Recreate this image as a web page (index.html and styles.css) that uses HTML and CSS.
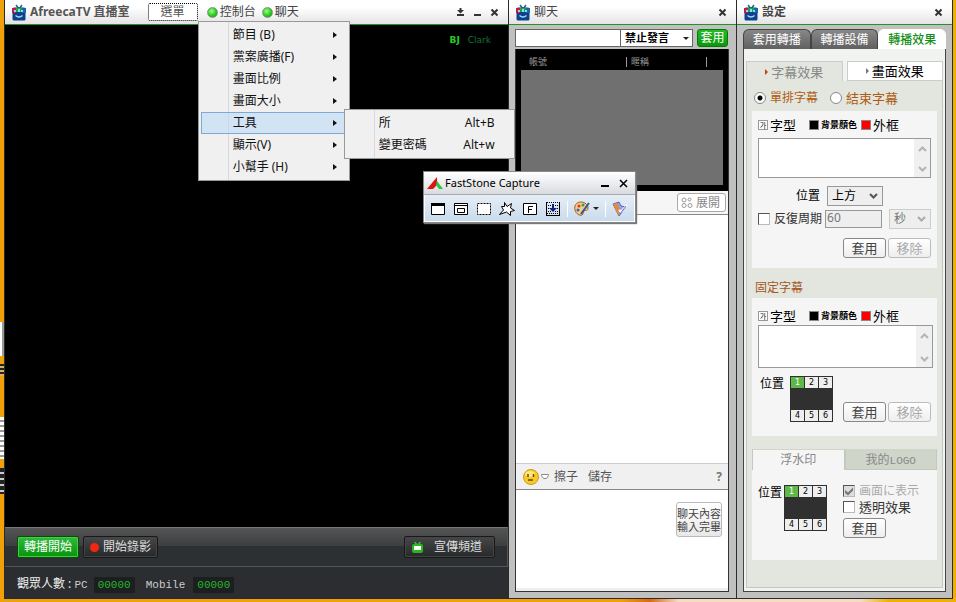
FILE: index.html
```html
<!DOCTYPE html>
<html lang="zh-Hant">
<head>
<meta charset="utf-8">
<title>AfreecaTV 直播室</title>
<link rel="stylesheet" href="styles.css">
</head>
<body>
<svg class="defs" aria-hidden="true">
  <symbol id="tv" viewBox="0 0 14 17">
    <path d="M4 1l3 4 3-4" fill="none" stroke="#1b6b78" stroke-width="1.5"/>
    <rect x="0.5" y="3.500" width="13" height="13" rx="1.500" fill="#123f8c"/>
    <path d="M0 4h4v5H0z" fill="#c2184e"/><path d="M4 4h6v4H4z" fill="#20a04a"/><path d="M10 4h4v5h-4z" fill="#1565a8"/>
    <path d="M2 6h2v2H2zM9 6h2v2H9zM6 5h2v3H6z" fill="#8ce0e8"/>
    <path d="M3.500 11.500q3.500 3 7 0" fill="none" stroke="#8fe6ff" stroke-width="1.500"/>
  </symbol>
  <symbol id="x" viewBox="0 0 9 9"><path d="M1.500 1.500l6 6M7.500 1.500l-6 6" fill="none" stroke="currentColor" stroke-width="2"/></symbol>
  <symbol id="up" viewBox="0 0 9 6"><path d="M1 5l3.500-3.500L8 5" fill="none" stroke="#b4b4b4" stroke-width="2"/></symbol>
  <symbol id="down" viewBox="0 0 9 6"><path d="M1 1l3.500 3.500L8 1" fill="none" stroke="currentColor" stroke-width="2"/></symbol>
</svg>
<main class="desktop">
  <section class="window studio">
    <header class="titlebar">
      <svg class="logo"><use href="#tv"/></svg>
      <h1 class="brand">AfreecaTV 直播室</h1>
      <nav class="menu-root">
        <button class="menu-button" type="button">選單</button>
        <ul class="menu">
          <li><button type="button">節目 (B)</button></li>
          <li><button type="button">黨案廣播(F)</button></li>
          <li><button type="button">畫面比例</button></li>
          <li><button type="button">畫面大小</button></li>
          <li class="open"><button type="button">工具</button>
            <ul class="menu submenu">
              <li><button type="button">所<kbd>Alt+B</kbd></button></li>
              <li><button type="button">變更密碼<kbd>Alt+w</kbd></button></li>
            </ul>
          </li>
          <li><button type="button">顯示(V)</button></li>
          <li><button type="button">小幫手 (H)</button></li>
        </ul>
      </nav>
      <button class="toggle" type="button"><i class="lamp"></i>控制台</button>
      <button class="toggle" type="button"><i class="lamp"></i>聊天</button>
      <div class="controls">
        <button type="button" aria-label="收合"><svg viewBox="0 0 9 9"><path d="M3.500 0h2v2H8L4.500 5.500 1 2h2.500zM1 6h7v2H1z" fill="currentColor"/></svg></button>
        <button type="button" aria-label="最小化"><svg viewBox="0 0 9 9"><path d="M1 6h7v2H1z" fill="currentColor"/></svg></button>
        <button type="button" aria-label="關閉"><svg><use href="#x"/></svg></button>
      </div>
    </header>
    <div class="stage"><p class="host"><b>BJ</b>Clark</p></div>
    <div class="deck">
      <button class="deck-button go" type="button">轉播開始</button>
      <button class="deck-button record" type="button"><i class="rec"></i>開始錄影</button>
      <button class="deck-button channel" type="button">
        <svg viewBox="0 0 11 11"><path d="M2.500 0l2 2M8.500 0l-2 2" stroke="#35c828" stroke-width="1.500"/><rect y="2" width="11" height="9" rx="2" fill="#28b51e"/><path d="M2 4h7v4H2z" fill="#fff"/></svg>宣傳頻道</button>
    </div>
    <footer class="viewers">
      <span>觀眾人數 : <span class="mono">PC</span></span><output>00000</output>
      <span class="mono mobile">Mobile</span><output>00000</output>
    </footer>
  </section>

  <section class="window chat">
    <header class="titlebar">
      <svg class="logo"><use href="#tv"/></svg>
      <h2>聊天</h2>
      <div class="controls"><button type="button" aria-label="關閉"><svg><use href="#x"/></svg></button></div>
    </header>
    <div class="frame">
      <form class="moderate">
        <input class="who" type="text" aria-label="帳號">
        <span class="picker"><select aria-label="動作"><option>禁止發言</option></select><i class="caret"></i></span>
        <button class="apply" type="button">套用</button>
      </form>
      <div class="chat-body">
        <div class="users">
          <div class="columns"><span>帳號</span><span>暱稱</span><span></span></div>
          <div class="user-list"></div>
        </div>
        <div class="expand-row">
          <button class="expand" type="button"><svg viewBox="0 0 12 12" fill="none" stroke="#999"><circle cx="3" cy="3" r="2"/><circle cx="8.500" cy="2.500" r="1.500"/><circle cx="3" cy="8.500" r="2"/><circle cx="9" cy="8.500" r="2"/></svg>展開</button>
        </div>
        <div class="messages"></div>
        <div class="chat-tools">
          <button type="button" aria-label="表情"><svg class="smile" viewBox="0 0 16 16"><circle cx="8" cy="8" r="7.500" fill="#f8ca28" stroke="#d29a16"/><ellipse cx="7" cy="5" rx="5" ry="3" fill="#ffe878"/><path d="M5 5v3M10.500 5v3M5 11h5" stroke="#6b4712" stroke-width="1.500"/></svg><svg class="drop" viewBox="0 0 8 5"><path d="M.5.5h7v1l-2 3h-3l-2-3z" fill="#fff" stroke="#888"/></svg></button>
          <button type="button">擦子</button>
          <button type="button">儲存</button>
          <button class="help" type="button">?</button>
        </div>
        <div class="compose">
          <textarea aria-label="聊天內容"></textarea>
          <button class="send" type="button"><span>聊天內容</span><span>輸入完畢</span></button>
        </div>
      </div>
    </div>
  </section>

  <section class="window settings">
    <header class="titlebar">
      <svg class="logo"><use href="#tv"/></svg>
      <h2 class="strong">設定</h2>
      <div class="controls"><button type="button" aria-label="關閉"><svg><use href="#x"/></svg></button></div>
    </header>
    <div class="frame">
      <div class="tabs" role="tablist">
        <button type="button" role="tab">套用轉播</button>
        <button type="button" role="tab">轉播設備</button>
        <button type="button" role="tab" aria-selected="true">轉播效果</button>
      </div>
      <div class="panel">
        <div class="subtabs">
          <button class="current" type="button"><i></i>字幕效果</button>
          <button type="button"><i></i>畫面效果</button>
        </div>
        <div class="inner">
          <div class="modes">
            <label><input type="radio" name="mode" checked>單排字幕</label>
            <label class="wide"><input type="radio" name="mode">結束字幕</label>
          </div>
          <div class="box first">
            <div class="style-row">
              <button class="font" type="button"><i class="glyph">가</i>字型</button>
              <button class="bg" type="button"><i class="swatch black"></i><span>背景顏色</span></button>
              <button type="button"><i class="swatch red"></i>外框</button>
            </div>
            <div class="caption"><textarea aria-label="單排字幕"></textarea><span class="scroll"><svg><use href="#up"/></svg><svg><use href="#down"/></svg></span></div>
            <div class="place-row"><label for="pos">位置</label><span class="drop-box"><select id="pos"><option>上方</option></select><svg><use href="#down"/></svg></span></div>
            <div class="cycle-row"><label><input type="checkbox">反復周期</label><input class="secs" type="text" value="60" aria-label="周期" disabled><span class="drop-box off"><select aria-label="單位" disabled><option>秒</option></select><svg><use href="#down"/></svg></span></div>
            <div class="actions"><button class="btn" type="button">套用</button><button class="btn" type="button" disabled>移除</button></div>
          </div>
          <h3>固定字幕</h3>
          <div class="box second">
            <div class="style-row">
              <button class="font" type="button"><i class="glyph">가</i>字型</button>
              <button class="bg" type="button"><i class="swatch black"></i><span>背景顏色</span></button>
              <button type="button"><i class="swatch red"></i>外框</button>
            </div>
            <div class="caption"><textarea aria-label="固定字幕"></textarea><span class="scroll"><svg><use href="#up"/></svg><svg><use href="#down"/></svg></span></div>
            <div class="spot-row">
              <span>位置</span>
              <div class="spots"><button class="on" type="button">1</button><button type="button">2</button><button type="button">3</button><button type="button">4</button><button type="button">5</button><button type="button">6</button></div>
              <div class="actions"><button class="btn" type="button">套用</button><button class="btn" type="button" disabled>移除</button></div>
            </div>
          </div>
          <div class="mark-tabs"><button class="current" type="button">浮水印</button><button type="button">我的<span class="mono">LOGO</span></button></div>
          <div class="box third">
            <div class="spot-row">
              <span>位置</span>
              <div class="spots"><button class="on" type="button">1</button><button type="button">2</button><button type="button">3</button><button type="button">4</button><button type="button">5</button><button type="button">6</button></div>
              <div class="checks">
                <label class="off"><input type="checkbox" checked disabled>画面に表示</label>
                <label class="clear"><input type="checkbox">透明效果</label>
                <button class="btn" type="button">套用</button>
              </div>
            </div>
          </div>
        </div>
      </div>
    </div>
  </section>

  <section class="capture">
    <header>
      <svg class="mark" viewBox="0 0 16 13"><path d="M0 12L10 0v8l-4 4z" fill="#dc1414"/><path d="M10 4l6 8h-4l-3-4z" fill="#28c83c"/></svg>
      <h2>FastStone Capture</h2>
      <button type="button" aria-label="最小化"><svg viewBox="0 0 9 9"><path d="M0 6h8v2H0z"/></svg></button>
      <button type="button" aria-label="關閉"><svg viewBox="0 0 9 9"><path d="M1 1l7 7M8 1L1 8" stroke="#000" stroke-width="1.500"/></svg></button>
    </header>
    <div class="tools">
      <button type="button" aria-label="視窗"><svg viewBox="0 0 16 16"><path d="M1.500 2.500h13v11h-13z" fill="#fff" stroke="#000"/><path d="M1 2h14v3H1z"/></svg></button>
      <button type="button" aria-label="物件"><svg viewBox="0 0 16 16"><path d="M1.500 2.500h13v11h-13zM2 4.500h12M4.500 7.500h7v4h-7z" fill="#fff" stroke="#000"/></svg></button>
      <button type="button" aria-label="矩形"><svg viewBox="0 0 16 16"><path d="M1.500 2.500h13v11h-13z" fill="#fff" stroke="#000" stroke-dasharray="2 1"/></svg></button>
      <button type="button" aria-label="手繪"><svg viewBox="0 0 16 16"><path d="M5.500 1.500L8 5.500l4.500-3-1 4.500 4 2.500-4 1v4L7.500 11 .5 13.500l4-4.500-2-3.500h3z" fill="#fff" stroke="#000"/></svg></button>
      <button type="button" aria-label="全螢幕"><svg viewBox="0 0 16 16"><path d="M1.500 2.500h13v11h-13z" fill="#fff" stroke="#000"/><path d="M6.500 12V5.500H11M6.500 8.500H10" fill="none" stroke="#000"/></svg></button>
      <button type="button" aria-label="捲動"><svg viewBox="0 0 16 16"><path d="M1.500 1v14M14.500 1v14M2 14.500h12" stroke="#000"/><path d="M2 1.500h12M2 12.500h12M3 4.500h3M10 4.500h3M3 7.500h1M12 7.500h1M3 10.500h3M10 10.500h3" stroke="#000" stroke-dasharray="1 1"/><path d="M7 3h2v4h3l-4 4-4-4h3z" fill="#102080"/></svg></button>
      <button class="split" type="button" aria-label="繪圖"><svg viewBox="0 0 16 16"><path d="M7 1C2 1 0 5 1 9c1 4 5 6 7 5s0-3 2-4 4 0 4-3-3-6-7-6z" fill="#f6cd83" stroke="#a05c20"/><circle cx="5" cy="5" r="1.500" fill="#d33"/><circle cx="9" cy="4" r="1.500" fill="#2a4"/><circle cx="4" cy="9" r="1.500" fill="#36c"/><path d="M15 2L7 13" stroke="#3456a5" stroke-width="2"/></svg><i class="caret"></i></button>
      <button class="split" type="button" aria-label="設定"><svg viewBox="0 0 16 16"><path d="M1 3l6-2 2 4 5 1-7 9z" fill="#8fa8e8" stroke="#5068b8"/><path d="M1 3l3 7 3 5 1-7-2-6z" fill="#e08a48"/><path d="M7 9l2 2 6-7" fill="none" stroke="#fff" stroke-width="2"/><path d="M8 13l6-8" stroke="#7658c8"/></svg></button>
    </div>
  </section>
</main>
</body>
</html>
```
FILE: styles.css
```css
* { box-sizing: border-box; }
body {
  margin: 0;
  font: 12px/16px "Noto Sans", "Noto Sans CJK TC", sans-serif;
  color: #333;
}
button, input, select, textarea { font: inherit; color: inherit; margin: 0; padding: 0; border: 0; border-radius: 0; background: none; }
button { white-space: nowrap; }
input, select, textarea { min-width: 0; }
select { appearance: none; }
h1, h2, h3, p, ul { margin: 0; padding: 0; font-weight: 400; font-size: 12px; }
ul { list-style: none; }
i { font-style: normal; flex: none; }
svg { display: block; flex: none; }
.defs { position: absolute; width: 0; height: 0; }
.mono, output { font-family: "Liberation Mono", monospace; font-size: 11px; }

.desktop {
  position: relative;
  display: grid;
  grid-template-columns: minmax(0, 1fr) 228px 217px;
  min-height: 100vh;
  padding: 0 3px 3px 4px;
  background:
    linear-gradient(90deg, #fff 0 2px, #999 2px) 0 322px / 4px 34px no-repeat,
    repeating-linear-gradient(#222 0 2px, #ddb060 2px 4px) 0 364px / 4px 12px no-repeat,
    repeating-linear-gradient(#fff 0 3px, #999 3px 5px) 0 417px / 4px 42px no-repeat,
    repeating-linear-gradient(#222 0 4px, #ccc 4px 6px) 0 468px / 4px 26px no-repeat,
    linear-gradient(90deg, #f0a008 0 65%, #d86a10 68%, #f8dcc0 71% 90%, #f0b000 93%);
}
.window { display: flex; flex-direction: column; border-left: 1px solid #2b2b2b; border-bottom: 1px solid #2b2b2b; min-width: 0; }
.titlebar {
  display: flex;
  align-items: center;
  height: 25px;
  padding: 0 9px 0 7px;
  background: linear-gradient(#fff 30%, #e4e4e4);
  border-bottom: 1px solid #279127;
  color: #444;
}
.logo { width: 14px; height: 17px; margin-right: 4px; }
.brand { font-weight: 700; color: #555; }
.strong { font-weight: 700; }
.controls { display: flex; gap: 8px; margin-left: auto; color: #333; }
.controls svg { width: 9px; height: 9px; }
.menu-root { position: relative; margin: 0 9px 0 18px; }
.menu-button { display: block; width: 50px; height: 18px; border: 1px dotted #000; border-radius: 2px; line-height: 16px; background: #fff; color: #555; }
.toggle { display: flex; align-items: center; gap: 2px; margin-right: 6px; }
.lamp { width: 11px; height: 11px; border-radius: 50%; border: 1px solid #7c9c7c; background: radial-gradient(circle at 40% 35%, #9cff80, #22c41c 60%, #0c970c); }

.menu {
  position: absolute;
  z-index: 2;
  left: 50px;
  top: 18px;
  width: 152px;
  padding: 2px;
  color: #111;
  border: 1px solid #999;
  background: linear-gradient(90deg, transparent 29px, #d5d9e2 29px 30px, transparent 30px) #f0f0f0;
}
.menu li { position: relative; }
.menu button { display: flex; justify-content: space-between; width: 100%; height: 22px; padding: 0 16px 0 31px; line-height: 20px; border: 1px solid transparent; text-align: left; }
.menu > li > button::after { content: ""; position: absolute; right: 10px; top: 8px; border: 3px solid transparent; border-left: 4px solid #111; border-right: 0; }
.menu .open > button { border-color: #7da8d8; background: rgba(190, 218, 245, .6); }
.menu .submenu { left: 143px; top: -3px; width: 171px; }
.menu .submenu > li > button::after { display: none; }
.menu kbd { font: inherit; }

.stage { flex: 1; background: #000; }
.host { display: flex; justify-content: flex-end; gap: 8px; padding: 7px 17px; font: 9px/16px "DejaVu Sans", sans-serif; color: #187038; }
.host b { color: #28c828; }
.deck {
  display: flex;
  gap: 4px;
  height: 40px;
  padding: 8px 12px;
  border: 1px solid #555;
  border-top-color: #777;
  border-left: 0;
  background: linear-gradient(#555 0, #3c3e40 18px, #2d3032 18px);
}
.deck-button { display: flex; align-items: center; justify-content: center; height: 22px; padding: 0 6px; line-height: 18px; color: #ddd; border: 1px solid #191919; border-radius: 2px; background: linear-gradient(#454749, #26282a); box-shadow: inset 0 0 0 1px #444; }
.deck .go { color: #fff; background: linear-gradient(#30ba3c, #05940b); border-color: #0a4c0a; box-shadow: inset 0 0 0 1px #45cc45; }
.rec { width: 9px; height: 9px; margin-right: 4px; border-radius: 50%; background: #f02810; }
.channel { margin-left: auto; padding: 0 12px 0 7px; }
.channel svg { width: 11px; height: 11px; margin-right: 11px; }
.viewers { display: flex; align-items: center; height: 31px; padding: 4px 12px 0; background: #2b2d30; color: #eee; }
.viewers .mono { color: #ccc; }
.viewers output { margin-left: 6px; padding: 0 4px; color: #28b52c; background: #1c1f20; }
.mobile { margin-left: 11px; }
.viewers .mobile + output { margin-left: 8px; }

.frame { flex: 1; display: flex; flex-direction: column; padding: 4px 6px 6px; background: #c0c0c0; }
.chat .frame { padding-right: 7px; }
.moderate { display: flex; height: 18px; margin-bottom: 2px; }
.who { flex: 1; border: 1px solid #666; background: #fff; }
.picker { display: flex; align-items: center; width: 72px; padding: 0 3px 0 4px; border: 1px solid #666; border-left: 0; background: #fff; color: #000; }
.picker select { flex: 1; font-size: 11px; font-weight: 700; line-height: 14px; }
.caret { border: 3px solid transparent; border-top: 3px solid #222; border-bottom: 0; }
.apply { width: 31px; margin: 0 1px 0 4px; line-height: 16px; color: #fff; border: 1px solid #087808; border-radius: 3px; background: linear-gradient(#28bb28, #0b980b); }
.chat-body { flex: 1; display: flex; flex-direction: column; border: 1px solid #333; border-top: 0; background: #fff; }
.users { height: 142px; padding: 4px 5px 6px; background: #000; display: flex; flex-direction: column; }
.columns { display: grid; grid-template-columns: 105px 80px 1fr; align-items: center; height: 17px; font-size: 9px; line-height: 10px; color: #999; }
.columns span { height: 10px; padding-left: 4px; border-left: 1px solid #999; }
.columns span:first-child { padding-left: 8px; border: 0; }
.user-list { flex: 1; background: #707070; }
.expand-row { display: flex; justify-content: flex-end; height: 24px; padding: 2px; background: #f6f6f6; border-bottom: 1px solid #888; }
.expand { display: flex; align-items: center; gap: 3px; height: 19px; padding: 0 5px 0 3px; border: 1px solid #aaa; border-radius: 3px; color: #888; background: #fff; }
.expand svg { width: 12px; height: 12px; }
.messages { flex: 1; }
.chat-tools { display: flex; align-items: center; gap: 10px; height: 27px; padding: 0 6px 0 7px; background: #f0f0f0; border-top: 1px solid #ccc; border-bottom: 1px solid #888; color: #555; }
.chat-tools button:first-child { display: flex; align-items: center; gap: 2px; margin-right: -5px; }
.smile { width: 16px; height: 16px; }
.drop { width: 8px; height: 5px; }
.help { margin-left: auto; font-weight: 700; color: #777; }
.compose { display: flex; height: 101px; padding: 12px 6px 0 0; border-bottom: 3px solid #eee; }
.compose textarea { flex: 1; resize: none; }
.send { display: flex; flex-direction: column; align-items: center; justify-content: center; width: 46px; height: 35px; font-size: 11px; line-height: 13px; border: 1px solid #bbb; border-radius: 3px; background: linear-gradient(#fff, #e8e8e8); color: #444; }

.settings { border-right: 1px solid #2b2b2b; }
.tabs { display: flex; height: 20px; }
.tabs button { flex: 1; line-height: 18px; color: #fff; background: linear-gradient(#888, #606060); border: 1px solid #444; border-bottom: 0; border-radius: 6px 6px 0 0; }
.tabs [aria-selected] { color: #149018; font-weight: 500; background: #fff; border-color: #fff; }
.panel { flex: 1; display: flex; flex-direction: column; padding: 12px 2px 3px; border: 1px solid #444; border-top: 0; background: #f1f3f0; }
.subtabs { display: flex; gap: 4px; height: 20px; font-size: 13px; }
.subtabs button { flex: 1; display: flex; align-items: center; justify-content: center; gap: 3px; line-height: 16px; color: #000; background: #fff; border: 1px solid #ccc; }
.subtabs i { border: 3px solid transparent; border-left-color: #777; border-right: 0; }
.subtabs .current { color: #888; background: #e2e6df; border-bottom: 0; }
.subtabs .current i { border-left-color: #c04010; }
.inner { flex: 1; padding: 0 5px; background: #e2e6df; border: 1px solid #c4c9c0; border-top: 0; }
.modes { display: flex; align-items: center; gap: 12px; height: 30px; padding: 3px 2px 0; color: #b05a10; }
.modes .wide { font-size: 13px; }
label { display: flex; align-items: center; white-space: nowrap; }
input[type="radio"] { appearance: none; width: 12px; height: 12px; margin-right: 4px; border: 1px solid #888; border-radius: 50%; background: #fff; }
input[type="radio"]:checked { background: radial-gradient(#000 2px, #fff 3px); }
input[type="checkbox"] { appearance: none; width: 12px; height: 12px; margin-right: 4px; border: 1px solid #bbb; border-top-color: #555; border-left-color: #555; background: #fff; }
input[type="checkbox"]:checked { background: #ddd; }
input[type="checkbox"]:checked::before { content: ""; display: block; height: 10px; background: #777; clip-path: polygon(10% 40%, 40% 65%, 90% 15%, 90% 45%, 40% 95%, 10% 70%); }
.box { padding: 5px 6px 0; background: #f5f5f5; }
.first { height: 157px; }
.second { height: 138px; }
.third { height: 90px; padding-top: 15px; }
.style-row { display: flex; align-items: center; height: 18px; margin-bottom: 4px; font-size: 13px; color: #000; }
.style-row button { display: flex; align-items: center; gap: 2px; line-height: 16px; }
.font { margin-right: 13px; }
.bg { margin-right: 4px; }
.bg span { font-size: 9px; font-weight: 700; }
.glyph { width: 10px; height: 10px; border: 1px solid #999; background: #fff; font: 7px/8px "Noto Sans CJK KR", sans-serif; }
.swatch { width: 10px; height: 10px; border: 1px solid #888; }
.black { background: #000; }
.red { background: #f00; }
.caption { display: flex; height: 40px; border: 1px solid #999; background: #fff; }
.second .style-row { margin: 4px 0 0; }
.second .caption { height: 43px; margin-right: -2px; }
.caption textarea { flex: 1; resize: none; }
.scroll { display: flex; flex-direction: column; justify-content: space-between; align-items: center; width: 16px; padding: 7px 0 5px; background: #f0f0f0; color: #b4b4b4; }
.scroll svg { width: 9px; height: 6px; }
.place-row { display: flex; align-items: center; gap: 7px; height: 20px; margin: 8px 0 3px 38px; color: #000; }
.drop-box { display: flex; align-items: center; width: 56px; height: 20px; padding: 0 4px; border: 1px solid #999; background: #eee; }
.drop-box select { flex: 1; line-height: 18px; opacity: 1; }
.drop-box svg { width: 9px; height: 6px; color: #555; }
.drop-box.off svg { color: #aaa; }
.off { color: #aaa; }
.drop-box.off { width: 42px; margin-left: 7px; border-color: #ccc; color: #777; }
.cycle-row { display: flex; align-items: center; height: 20px; }
.cycle-row label { margin-right: 3px; }
.secs { width: 57px; height: 18px; padding: 0 1px 4px; border: 1px solid #999; background: #eee; color: #777; }
.actions { display: flex; justify-content: flex-end; gap: 2px; margin-left: auto; }
.first .actions { margin-top: 9px; }
.btn { width: 43px; height: 20px; font-size: 13px; line-height: 16px; color: #444; border: 1px solid #888; border-radius: 3px; background: linear-gradient(#fff, #eee); }
.btn:disabled { color: #aaa; border-color: #bbb; }
h3 { height: 30px; padding: 12px 3px 0; color: #a4561c; }
.spot-row { display: flex; align-items: flex-start; color: #000; }
.second .spot-row { margin-top: 8px; padding-left: 2px; }
.second .actions { margin-top: 26px; }
.spots { display: grid; grid-template-columns: repeat(3, 1fr); align-content: space-between; gap: 1px; width: 43px; height: 46px; margin-left: 6px; padding: 1px; background: #303030; }
.third .spots { margin-left: 2px; }
.spots button { height: 11px; font: 8px/11px "DejaVu Sans", sans-serif; background: #eee; color: #000; }
.spots .on { color: #fff; background: #60b848; }
.mark-tabs { display: flex; height: 21px; margin-top: 13px; }
.mark-tabs button { flex: 1; line-height: 20px; color: #888; background: #d0d5ca; border: 1px solid #c4c9c0; border-top-color: #d0d5ca; }
.mark-tabs .current { background: #f5f5f5; border-bottom: 0; }
.checks { display: flex; flex-direction: column; margin: -2px 0 0 16px; color: #333; }
.clear { font-size: 13px; }
.checks .btn { margin-top: 3px; }

.capture { position: absolute; z-index: 3; left: 423px; top: 171px; width: 213px; border: 1px solid #888; background: linear-gradient(#fff, #c8daec); box-shadow: inset 0 0 0 1px #fff, 1px 1px 1px #777; color: #000; }
.capture header { display: flex; align-items: center; height: 23px; padding: 0 7px 0 3px; border-bottom: 1px solid #aaa; background: linear-gradient(#fff, #d8dbdf); }
.capture h2 { flex: 1; margin-left: 2px; font: 11px/16px "Noto Sans", sans-serif; }
.mark { width: 16px; height: 13px; }
.capture header button + button { margin-left: 9px; }
.capture header button svg { width: 9px; height: 9px; }
.tools { display: flex; align-items: center; gap: 7px; height: 27px; padding: 0 6px; }
.tools svg { width: 16px; height: 16px; }
.split { display: flex; align-items: center; gap: 3px; margin-left: -1px; padding-left: 6px; border-left: 1px solid #fff; }
```
